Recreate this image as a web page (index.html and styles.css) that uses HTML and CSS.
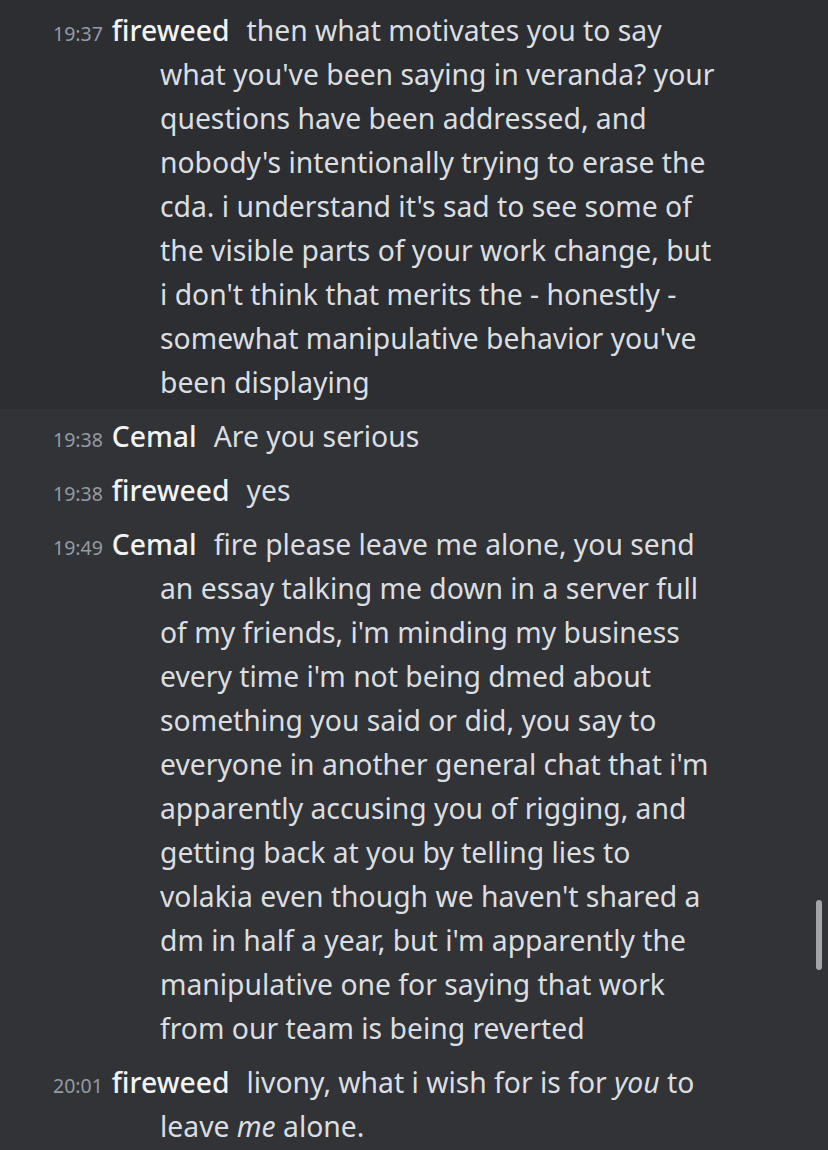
FILE: index.html
```html
<!DOCTYPE html>
<html lang="en">
<head>
<meta charset="utf-8">
<title>Chat</title>
<link rel="stylesheet" href="styles.css">
</head>
<body>
<main class="chat">
  <div class="msg msg-hover">
    <span class="ts">19:37</span><span class="name">fireweed</span><span class="text">then what motivates you to say<br>what you've been saying in veranda? your<br>questions have been addressed, and<br>nobody's intentionally trying to erase the<br>cda. i understand it's sad to see some of<br>the visible parts of your work change, but<br>i don't think that merits the - honestly -<br>somewhat manipulative behavior you've<br>been displaying</span>
  </div>
  <div class="msg">
    <span class="ts">19:38</span><span class="name">Cemal</span><span class="text">Are you serious</span>
  </div>
  <div class="msg">
    <span class="ts">19:38</span><span class="name">fireweed</span><span class="text">yes</span>
  </div>
  <div class="msg">
    <span class="ts">19:49</span><span class="name">Cemal</span><span class="text">fire please leave me alone, you send<br>an essay talking me down in a server full<br>of my friends, i'm minding my business<br>every time i'm not being dmed about<br>something you said or did, you say to<br>everyone in another general chat that i'm<br>apparently accusing you of rigging, and<br>getting back at you by telling lies to<br>volakia even though we haven't shared a<br>dm in half a year, but i'm apparently the<br>manipulative one for saying that work<br>from our team is being reverted</span>
  </div>
  <div class="msg">
    <span class="ts">20:01</span><span class="name">fireweed</span><span class="text">livony, what i wish for is for <em>you</em> to<br>leave <em>me</em> alone.</span>
  </div>
  <div class="scrollbar"></div>
</main>
</body>
</html>
```

FILE: styles.css
```css
html, body {
  margin: 0;
  padding: 0;
  background: #313336;
}
body {
  width: 828px;
  height: 1150px;
  overflow: hidden;
  font-family: "Noto Sans", "Open Sans", sans-serif;
}
.chat {
  position: relative;
  height: 1150px;
}
.msg {
  padding: 5px 0 5px 160px;
  text-indent: -107px;
  line-height: 44px;
  font-size: 28.3px;
  color: #dbdee1;
}
.msg-hover {
  background: #2c2e32;
  padding-top: 8px;
}
.ts {
  font-size: 19.5px;
  line-height: 1;
  color: #949ba4;
  margin-right: 9px;
}
.name {
  color: #f2f3f5;
  font-weight: 500;
  margin-right: 17px;
}
.text em {
  font-style: italic;
}
.scrollbar {
  position: absolute;
  right: 6px;
  top: 900px;
  width: 6px;
  height: 70px;
  border-radius: 3px;
  background: #a1a4a8;
}
```
